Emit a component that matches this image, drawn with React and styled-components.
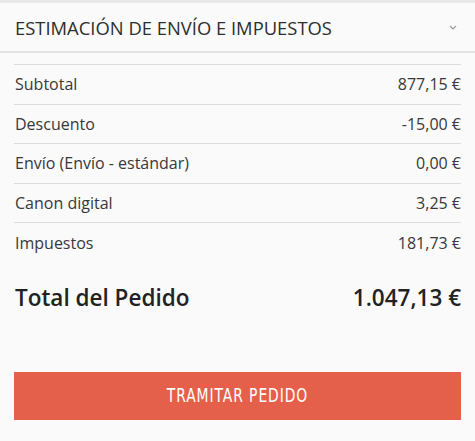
import styled, { createGlobalStyle } from "styled-components";

const GlobalStyle = createGlobalStyle`
  html, body {
    margin: 0;
    padding: 0;
    background: #fafafa;
  }
  body {
    font-family: "Open Sans", "Noto Sans", sans-serif;
    color: #333333;
  }
`;

const rows = [
  { label: "Subtotal", value: "877,15 €" },
  { label: "Descuento", value: "-15,00 €" },
  { label: "Envío (Envío - estándar)", value: "0,00 €" },
  { label: "Canon digital", value: "3,25 €" },
  { label: "Impuestos", value: "181,73 €" },
];

const Chevron = () => (
  <svg width="8" height="5" viewBox="0 0 8 5">
    <path d="M1 1l3 3 3-3" fill="none" stroke="#9a9a9a" strokeWidth="1.2" />
  </svg>
);

export default function App() {
  return (
    <>
      <GlobalStyle />
      <Page>
        <Header>
          <HeaderTitle>ESTIMACIÓN DE ENVÍO E IMPUESTOS</HeaderTitle>
          <Chevron />
        </Header>
        <Summary>
          {rows.map((row) => (
            <Row key={row.label}>
              <span>{row.label}</span>
              <span>{row.value}</span>
            </Row>
          ))}
          <TotalRow>
            <span>Total del Pedido</span>
            <span>1.047,13 €</span>
          </TotalRow>
          <CheckoutButton>
            <ButtonLabel>TRAMITAR PEDIDO</ButtonLabel>
          </CheckoutButton>
        </Summary>
      </Page>
    </>
  );
}

const Page = styled.div`
  width: 475px;
  height: 441px;
  border-top: 3px solid #e8e8e8;
  box-sizing: border-box;
  overflow: hidden;
`;

const Header = styled.div`
  display: flex;
  align-items: center;
  justify-content: space-between;
  height: 48px;
  padding: 0 18px 0 15px;
  border-bottom: 2px solid #e3e3e3;
`;

const HeaderTitle = styled.div`
  font-size: 18.4px;
  font-weight: 400;
  color: #2e2e2e;
`;

const Summary = styled.div`
  display: flex;
  flex-direction: column;
  padding: 0 14px;
  margin-top: 11px;
`;

const Row = styled.div`
  display: flex;
  justify-content: space-between;
  align-items: center;
  box-sizing: border-box;
  height: 39.6px;
  font-size: 16px;
  color: #383838;
  border-top: 1px solid #dcdcdc;
  padding: 0 0 0 1px;
  &:last-of-type {
    border-bottom: 1px solid #dcdcdc;
  }
`;

const TotalRow = styled.div`
  display: flex;
  justify-content: space-between;
  align-items: center;
  height: 71px;
  font-size: 22.5px;
  font-weight: 600;
  color: #222222;
  padding-left: 1px;
`;

const CheckoutButton = styled.button`
  display: flex;
  align-items: center;
  justify-content: center;
  margin-top: 39px;
  height: 48px;
  border: 0;
  background: #e5604a;
  cursor: pointer;
`;

const ButtonLabel = styled.span`
  display: inline-block;
  color: #ffffff;
  font-family: "DejaVu Sans", sans-serif;
  font-stretch: condensed;
  font-size: 19.5px;
  letter-spacing: 1.2px;
  transform: scaleX(0.79);
`;
